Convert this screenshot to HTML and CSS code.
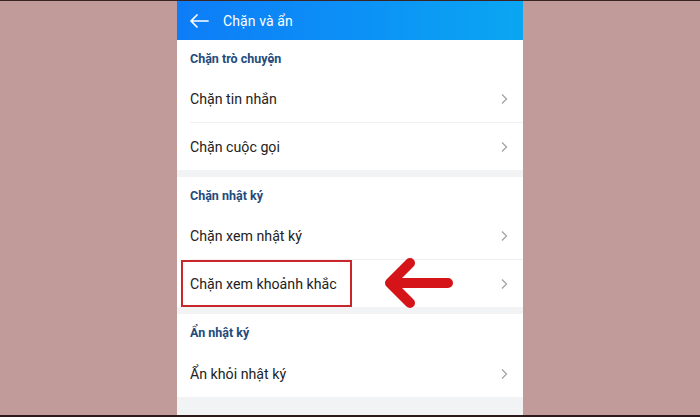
FILE: index.html
```html
<!DOCTYPE html>
<html lang="vi">
<head>
<meta charset="utf-8">
<link rel="stylesheet" href="styles.css">
</head>
<body>
<div class="edge-top"></div>
<div class="stage">
  <div class="phone">
    <div class="header">
      <svg class="back" width="20" height="14" viewBox="0 0 20 14"><path d="M19 7H2M8 1L2 7l6 6" fill="none" stroke="#fff" stroke-width="1.7" stroke-linecap="round" stroke-linejoin="round"/></svg>
      <span class="title">Chặn và ẩn</span>
    </div>
    <div class="section">
      <div class="sec-title">Chặn trò chuyện</div>
      <div class="row"><span>Chặn tin nhắn</span><svg class="chev" width="8" height="12" viewBox="0 0 8 12"><path d="M2 1.5L6.5 6 2 10.5" fill="none" stroke="#a3a3a3" stroke-width="1.3"/></svg></div>
      <div class="row last"><span>Chặn cuộc gọi</span><svg class="chev" width="8" height="12" viewBox="0 0 8 12"><path d="M2 1.5L6.5 6 2 10.5" fill="none" stroke="#a3a3a3" stroke-width="1.3"/></svg></div>
    </div>
    <div class="section">
      <div class="sec-title">Chặn nhật ký</div>
      <div class="row"><span>Chặn xem nhật ký</span><svg class="chev" width="8" height="12" viewBox="0 0 8 12"><path d="M2 1.5L6.5 6 2 10.5" fill="none" stroke="#a3a3a3" stroke-width="1.3"/></svg></div>
      <div class="row last marked"><span>Chặn xem khoảnh khắc</span><svg class="chev" width="8" height="12" viewBox="0 0 8 12"><path d="M2 1.5L6.5 6 2 10.5" fill="none" stroke="#a3a3a3" stroke-width="1.3"/></svg>
        <div class="redbox"></div>
        <svg class="arrow" width="80" height="52" viewBox="0 0 80 52"><path d="M8 26H66M28 6L8 26l20 20" fill="none" stroke="#d5141a" stroke-width="10" stroke-linecap="round" stroke-linejoin="round"/></svg>
      </div>
    </div>
    <div class="section">
      <div class="sec-title">Ẩn nhật ký</div>
      <div class="row last"><span>Ẩn khỏi nhật ký</span><svg class="chev" width="8" height="12" viewBox="0 0 8 12"><path d="M2 1.5L6.5 6 2 10.5" fill="none" stroke="#a3a3a3" stroke-width="1.3"/></svg></div>
    </div>
    <div class="filler"></div>
  </div>
</div>
<div class="edge-bottom"></div>
</body>
</html>
```
FILE: styles.css
```css
html, body {
  margin: 0;
  padding: 0;
}
body {
  width: 700px;
  height: 417px;
  background: #c19b9a;
  display: flex;
  flex-direction: column;
  font-family: Roboto, "Noto Sans", sans-serif;
  overflow: hidden;
}
.edge-top {
  height: 1px;
  background: #3a2424;
}
.edge-bottom {
  height: 2px;
  background: #2c1a1a;
}
.stage {
  flex: 1;
  display: flex;
  justify-content: flex-start;
  padding-left: 177px;
}
.phone {
  width: 346px;
  background: #f2f3f5;
  display: flex;
  flex-direction: column;
  gap: 7px;
}
.header {
  height: 39px;
  background: linear-gradient(90deg, #0d7df7 0%, #0c90f6 50%, #0aa6f2 100%);
  display: flex;
  align-items: center;
  padding-left: 12px;
  margin-bottom: -7px;
}
.back {
  margin-right: 14px;
}
.title {
  color: #fff;
  font-size: 14px;
  letter-spacing: 0.1px;
}
.section {
  background: #fff;
  display: flex;
  flex-direction: column;
}
.sec-title {
  height: 36px;
  display: flex;
  align-items: center;
  padding-left: 13px;
  font-size: 12.5px;
  font-weight: 700;
  color: #244a7c;
}
.row {
  height: 47px;
  display: flex;
  align-items: center;
  justify-content: space-between;
  margin-left: 13px;
  padding-right: 15px;
  border-bottom: 1px solid #efefef;
  box-sizing: border-box;
  font-size: 14.2px;
  color: #222;
  position: relative;
}
.row.last {
  border-bottom: none;
}
.chev {
  display: block;
}
.redbox {
  position: absolute;
  left: -9px;
  top: 0;
  width: 171px;
  height: 47px;
  border: 2.5px solid #c8262b;
  box-sizing: border-box;
}
.arrow {
  position: absolute;
  left: 192px;
  top: -3px;
}
.filler {
  flex: 1;
}
```
